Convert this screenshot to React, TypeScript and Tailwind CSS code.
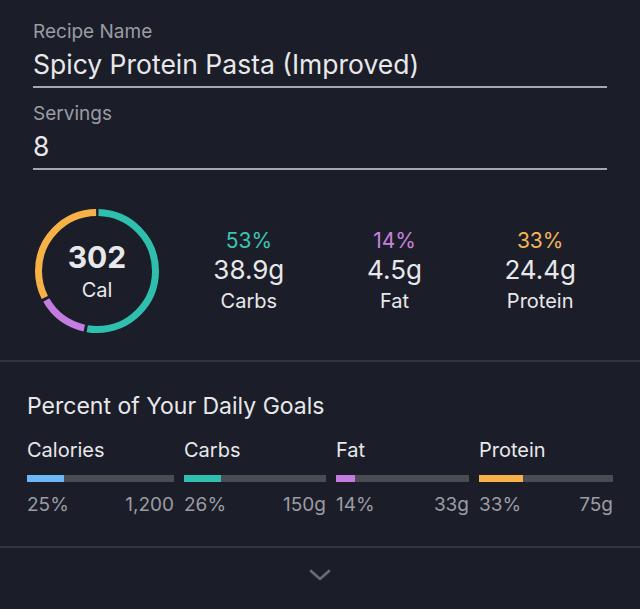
const MACROS = [
  { pct: "53%", grams: "38.9g", name: "Carbs", color: "text-[#3cc4b4]" },
  { pct: "14%", grams: "4.5g", name: "Fat", color: "text-[#c683de]" },
  { pct: "33%", grams: "24.4g", name: "Protein", color: "text-[#f5b453]" },
];

const GOALS = [
  { name: "Calories", pct: 25, goal: "1,200", bar: "bg-[#6fb6f6]" },
  { name: "Carbs", pct: 26, goal: "150g", bar: "bg-[#2fbfae]" },
  { name: "Fat", pct: 14, goal: "33g", bar: "bg-[#c47ce0]" },
  { name: "Protein", pct: 33, goal: "75g", bar: "bg-[#f7b247]" },
];

const Field = ({ label, value, className = "" }: { label: string; value: string; className?: string }) => {
  return (
    <div className={className}>
      <div className="text-[19px] leading-[23px] text-[#9a9ca3]">{label}</div>
      <div className="mt-[5px] pb-[6px] border-b-2 border-[#a7a8ad] text-[26.5px] leading-[32px] text-[#e8e8eb]">
        {value}
      </div>
    </div>
  );
};

const Ring = () => {
  const size = 124;
  const stroke = 7;
  const r = (size - stroke) / 2;
  const c = 2 * Math.PI * r;
  const gap = 3;
  const parts = [
    { frac: 0.53, color: "#2fbfae" },
    { frac: 0.14, color: "#c47ce0" },
    { frac: 0.33, color: "#f7b247" },
  ];
  let start = 0;
  return (
    <div className="relative w-[124px] h-[124px] shrink-0">
      <svg width={size} height={size} viewBox={`0 0 ${size} ${size}`} className="-rotate-90">
        {parts.map((p) => {
          const len = p.frac * c - gap;
          const offset = start + gap / 2;
          start += p.frac * c;
          return (
            <circle
              key={p.color}
              cx={size / 2}
              cy={size / 2}
              r={r}
              fill="none"
              stroke={p.color}
              strokeWidth={stroke}
              strokeDasharray={`${len} ${c - len}`}
              strokeDashoffset={-offset}
            />
          );
        })}
      </svg>
      <div className="absolute inset-0 flex flex-col items-center justify-center">
        <div className="text-[30px] leading-[32px] font-bold text-[#e8e8eb]">302</div>
        <div className="mt-[6px] text-[20px] leading-[22px] text-[#e8e8eb]">Cal</div>
      </div>
    </div>
  );
};

export default function App() {
  return (
    <div className="w-[640px] h-[609px] overflow-hidden bg-[#1b1d28] font-['Inter',sans-serif]">
      <div className="px-[33px] pt-[20px]">
        <Field label="Recipe Name" value="Spicy Protein Pasta (Improved)" />
        <Field label="Servings" value="8" className="mt-[14px]" />
      </div>

      <div className="flex items-center pl-[35px] pr-[27px] pt-[39px] pb-[27px] border-b-2 border-[#34363f]">
        <Ring />
        <div className="flex flex-1 ml-[17px]">
          {MACROS.map((m) => (
            <div key={m.name} className="flex-1 flex flex-col items-center">
              <div className={`text-[21px] leading-[22px] ${m.color}`}>{m.pct}</div>
              <div className="mt-[3px] text-[26px] leading-[30px] text-[#e8e8eb]">{m.grams}</div>
              <div className="mt-[4px] text-[20px] leading-[24px] text-[#e8e8eb]">{m.name}</div>
            </div>
          ))}
        </div>
      </div>

      <div className="px-[27px] pt-[30px] pb-[29px] border-b-2 border-[#34363f]">
        <div className="text-[23px] leading-[28px] text-[#e8e8eb]">Percent of Your Daily Goals</div>
        <div className="mt-[18px] grid grid-cols-[147px_142px_133px_134px] gap-x-[10px]">
          {GOALS.map((g) => (
            <div key={g.name}>
              <div className="text-[20px] leading-[24px] text-[#e8e8eb]">{g.name}</div>
              <div className="mt-[13px] h-[7px] bg-[#4a4c54]">
                <div className={`h-full ${g.bar}`} style={{ width: `${g.pct}%` }} />
              </div>
              <div className="mt-[11px] flex justify-between text-[19px] leading-[24px] text-[#9a9ca3]">
                <span>{g.pct}%</span>
                <span>{g.goal}</span>
              </div>
            </div>
          ))}
        </div>
      </div>

      <div className="flex justify-center pt-[21px]">
        <svg width="22" height="12" viewBox="0 0 22 12" fill="none">
          <path d="M2 2 L11 10 L20 2" stroke="#6a6c74" strokeWidth="2.6" strokeLinecap="round" strokeLinejoin="round" />
        </svg>
      </div>
    </div>
  );
}
